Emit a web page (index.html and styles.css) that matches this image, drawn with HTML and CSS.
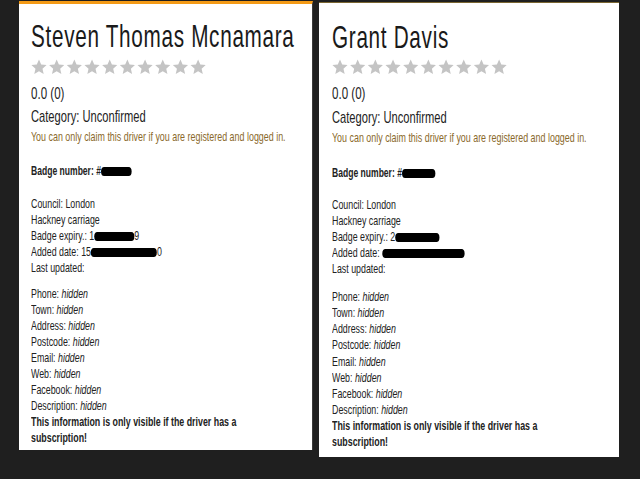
FILE: index.html
```html
<!DOCTYPE html>
<html lang="en">
<head>
<meta charset="utf-8">
<title>Drivers</title>
<link rel="stylesheet" href="styles.css">
</head>
<body>
<div class="page">
  <div class="card card-first">
    <div class="inner">
      <h1 class="name">Steven Thomas Mcnamara</h1>
      <div class="stars">
        <svg viewBox="0 0 16 16" preserveAspectRatio="none"><path d="M8 0.6l2.2 5 5.4.5-4.1 3.6 1.2 5.3L8 12.2 3.3 15l1.2-5.3L.4 6.1l5.4-.5z"/></svg>
        <svg viewBox="0 0 16 16" preserveAspectRatio="none"><path d="M8 0.6l2.2 5 5.4.5-4.1 3.6 1.2 5.3L8 12.2 3.3 15l1.2-5.3L.4 6.1l5.4-.5z"/></svg>
        <svg viewBox="0 0 16 16" preserveAspectRatio="none"><path d="M8 0.6l2.2 5 5.4.5-4.1 3.6 1.2 5.3L8 12.2 3.3 15l1.2-5.3L.4 6.1l5.4-.5z"/></svg>
        <svg viewBox="0 0 16 16" preserveAspectRatio="none"><path d="M8 0.6l2.2 5 5.4.5-4.1 3.6 1.2 5.3L8 12.2 3.3 15l1.2-5.3L.4 6.1l5.4-.5z"/></svg>
        <svg viewBox="0 0 16 16" preserveAspectRatio="none"><path d="M8 0.6l2.2 5 5.4.5-4.1 3.6 1.2 5.3L8 12.2 3.3 15l1.2-5.3L.4 6.1l5.4-.5z"/></svg>
        <svg viewBox="0 0 16 16" preserveAspectRatio="none"><path d="M8 0.6l2.2 5 5.4.5-4.1 3.6 1.2 5.3L8 12.2 3.3 15l1.2-5.3L.4 6.1l5.4-.5z"/></svg>
        <svg viewBox="0 0 16 16" preserveAspectRatio="none"><path d="M8 0.6l2.2 5 5.4.5-4.1 3.6 1.2 5.3L8 12.2 3.3 15l1.2-5.3L.4 6.1l5.4-.5z"/></svg>
        <svg viewBox="0 0 16 16" preserveAspectRatio="none"><path d="M8 0.6l2.2 5 5.4.5-4.1 3.6 1.2 5.3L8 12.2 3.3 15l1.2-5.3L.4 6.1l5.4-.5z"/></svg>
        <svg viewBox="0 0 16 16" preserveAspectRatio="none"><path d="M8 0.6l2.2 5 5.4.5-4.1 3.6 1.2 5.3L8 12.2 3.3 15l1.2-5.3L.4 6.1l5.4-.5z"/></svg>
        <svg viewBox="0 0 16 16" preserveAspectRatio="none"><path d="M8 0.6l2.2 5 5.4.5-4.1 3.6 1.2 5.3L8 12.2 3.3 15l1.2-5.3L.4 6.1l5.4-.5z"/></svg>
      </div>
      <div class="score">0.0 (0)</div>
      <div class="category">Category: Unconfirmed</div>
      <div class="claim">You can only claim this driver if you are registered and logged in.</div>
      <div class="badge">Badge number: #<span class="redact r-badge1"></span></div>
      <div class="block block-reg">
        <div>Council: London</div>
        <div>Hackney carriage</div>
        <div>Badge expiry.: 1<span class="redact r-exp1"></span>9</div>
        <div>Added date: 15<span class="redact r-add1"></span>0</div>
        <div>Last updated:</div>
      </div>
      <div class="block block-contact">
        <div>Phone: <em>hidden</em></div>
        <div>Town: <em>hidden</em></div>
        <div>Address: <em>hidden</em></div>
        <div>Postcode: <em>hidden</em></div>
        <div>Email: <em>hidden</em></div>
        <div>Web: <em>hidden</em></div>
        <div>Facebook: <em>hidden</em></div>
        <div>Description: <em>hidden</em></div>
        <div class="note">This information is only visible if the driver has a subscription!</div>
      </div>
    </div>
  </div>
  <div class="card card-second">
    <div class="inner">
      <h1 class="name">Grant Davis</h1>
      <div class="stars">
        <svg viewBox="0 0 16 16" preserveAspectRatio="none"><path d="M8 0.6l2.2 5 5.4.5-4.1 3.6 1.2 5.3L8 12.2 3.3 15l1.2-5.3L.4 6.1l5.4-.5z"/></svg>
        <svg viewBox="0 0 16 16" preserveAspectRatio="none"><path d="M8 0.6l2.2 5 5.4.5-4.1 3.6 1.2 5.3L8 12.2 3.3 15l1.2-5.3L.4 6.1l5.4-.5z"/></svg>
        <svg viewBox="0 0 16 16" preserveAspectRatio="none"><path d="M8 0.6l2.2 5 5.4.5-4.1 3.6 1.2 5.3L8 12.2 3.3 15l1.2-5.3L.4 6.1l5.4-.5z"/></svg>
        <svg viewBox="0 0 16 16" preserveAspectRatio="none"><path d="M8 0.6l2.2 5 5.4.5-4.1 3.6 1.2 5.3L8 12.2 3.3 15l1.2-5.3L.4 6.1l5.4-.5z"/></svg>
        <svg viewBox="0 0 16 16" preserveAspectRatio="none"><path d="M8 0.6l2.2 5 5.4.5-4.1 3.6 1.2 5.3L8 12.2 3.3 15l1.2-5.3L.4 6.1l5.4-.5z"/></svg>
        <svg viewBox="0 0 16 16" preserveAspectRatio="none"><path d="M8 0.6l2.2 5 5.4.5-4.1 3.6 1.2 5.3L8 12.2 3.3 15l1.2-5.3L.4 6.1l5.4-.5z"/></svg>
        <svg viewBox="0 0 16 16" preserveAspectRatio="none"><path d="M8 0.6l2.2 5 5.4.5-4.1 3.6 1.2 5.3L8 12.2 3.3 15l1.2-5.3L.4 6.1l5.4-.5z"/></svg>
        <svg viewBox="0 0 16 16" preserveAspectRatio="none"><path d="M8 0.6l2.2 5 5.4.5-4.1 3.6 1.2 5.3L8 12.2 3.3 15l1.2-5.3L.4 6.1l5.4-.5z"/></svg>
        <svg viewBox="0 0 16 16" preserveAspectRatio="none"><path d="M8 0.6l2.2 5 5.4.5-4.1 3.6 1.2 5.3L8 12.2 3.3 15l1.2-5.3L.4 6.1l5.4-.5z"/></svg>
        <svg viewBox="0 0 16 16" preserveAspectRatio="none"><path d="M8 0.6l2.2 5 5.4.5-4.1 3.6 1.2 5.3L8 12.2 3.3 15l1.2-5.3L.4 6.1l5.4-.5z"/></svg>
      </div>
      <div class="score">0.0 (0)</div>
      <div class="category">Category: Unconfirmed</div>
      <div class="claim">You can only claim this driver if you are registered and logged in.</div>
      <div class="badge">Badge number: #<span class="redact r-badge2"></span></div>
      <div class="block block-reg">
        <div>Council: London</div>
        <div>Hackney carriage</div>
        <div>Badge expiry.: 2<span class="redact r-exp2"></span></div>
        <div>Added date: <span class="redact r-add2"></span></div>
        <div>Last updated:</div>
      </div>
      <div class="block block-contact">
        <div>Phone: <em>hidden</em></div>
        <div>Town: <em>hidden</em></div>
        <div>Address: <em>hidden</em></div>
        <div>Postcode: <em>hidden</em></div>
        <div>Email: <em>hidden</em></div>
        <div>Web: <em>hidden</em></div>
        <div>Facebook: <em>hidden</em></div>
        <div>Description: <em>hidden</em></div>
        <div class="note">This information is only visible if the driver has a subscription!</div>
      </div>
    </div>
  </div>
</div>
</body>
</html>
```
FILE: styles.css
```css
html, body {
  margin: 0;
  padding: 0;
  background: #1f1f1f;
}
body {
  font-family: "Liberation Sans", Arial, sans-serif;
  color: #222;
  width: 640px;
  height: 479px;
  overflow: hidden;
}
.page {
  display: flex;
  align-items: flex-start;
  gap: 6px;
  padding: 1px 0 0 19px;
}
.card {
  background: #fff;
  box-sizing: border-box;
  overflow: hidden;
}
.card-first {
  width: 294px;
  border-top: 3px solid #f39a16;
  border-right: 1px solid #3a3a3a;
  padding: 0 0 4px 12px;
}
.card-second {
  width: 300px;
  margin-top: 1px;
  border-top: 1px solid #7a6632;
  padding: 0 0 6px 13px;
}
/* text is rendered in a regular face and narrowed to match the condensed original */
.inner {
  transform: scaleX(0.68);
  transform-origin: 0 0;
}
.card-first .inner { width: 375px; }
.card-second .inner { width: 386px; }

.name {
  margin: 14px 0 0;
  font-size: 30.5px;
  line-height: 36px;
  font-weight: normal;
  letter-spacing: 1px;
  white-space: nowrap;
  color: #1a1a1a;
}
.stars {
  display: flex;
  gap: 2.5px;
  margin-top: 5px;
  height: 16px;
}
.stars svg {
  width: 23.5px;
  height: 16px;
  fill: #c4c4c4;
  flex: none;
}
.score {
  margin-top: 8px;
  font-size: 17px;
  line-height: 22px;
}
.category {
  font-size: 16.4px;
  line-height: 22px;
}
.claim {
  font-size: 13.1px;
  line-height: 20px;
  white-space: nowrap;
  color: #8a692b;
}
.badge {
  margin-top: 16px;
  font-size: 12.6px;
  line-height: 16px;
  font-weight: bold;
}
.block {
  font-size: 13px;
  line-height: 16px;
}
.block-reg { margin-top: 17px; }
.block-contact { margin-top: 10px; }
.block em { font-style: italic; }
.note { font-weight: bold; }

.card-second .name { margin-top: 16px; }
.card-second .stars { margin-top: 4px; }
.card-second .category { margin-top: 1px; }
.card-second .badge { margin-top: 17px; }
.card-second .block-reg { margin-top: 16px; }
.card-second .block-contact { margin-top: 12px; line-height: 16.15px; }

.redact {
  display: inline-block;
  background: #000;
  height: 9px;
  border-radius: 5px;
  vertical-align: -1px;
}
.r-badge1 { width: 45px; }
.r-exp1 { width: 59px; }
.r-add1 { width: 97px; }
.r-badge2 { width: 49px; }
.r-exp2 { width: 65px; }
.r-add2 { width: 121px; }
```
